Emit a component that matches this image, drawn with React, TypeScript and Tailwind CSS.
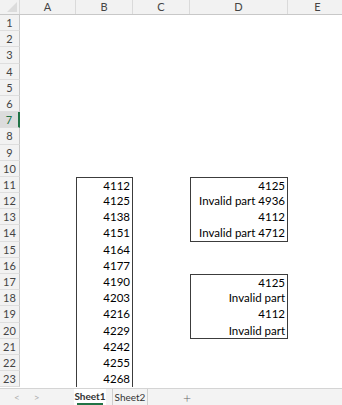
const cols = [
  { name: "A", w: "w-[56px]" },
  { name: "B", w: "w-[57px]" },
  { name: "C", w: "w-[57px]" },
  { name: "D", w: "w-[98px]" },
  { name: "E", w: "w-[60px]" },
];

const bValues = [4112, 4125, 4138, 4151, 4164, 4177, 4190, 4203, 4216, 4229, 4242, 4255, 4268];

const dValues: Record<number, string> = {
  11: "4125",
  12: "Invalid part 4936",
  13: "4112",
  14: "Invalid part 4712",
  17: "4125",
  18: "Invalid part",
  19: "4112",
  20: "Invalid part",
};

const boxRow = (r: number) => {
  const firstBox = r >= 11 && r <= 14;
  const secondBox = r >= 17 && r <= 20;
  if (!firstBox && !secondBox) return "";
  const top = r === 11 || r === 17 ? " border-t" : "";
  const bottom = r === 14 || r === 20 ? " border-b" : "";
  return "border-l border-r border-[#3c3c3c]" + top + bottom;
};

const rows = Array.from({ length: 23 }, (_, i) => i + 1);

export default function App() {
  return (
    <div className="flex h-[405px] w-[342px] flex-col overflow-hidden bg-white font-['Lato',sans-serif] text-[11.5px] text-black">
      {/* column headers */}
      <div className="flex h-[15px] shrink-0 border-b border-[#c8c8c8] bg-[#f2f2f2] text-[11px] text-[#444]">
        <div className="relative w-[20px] shrink-0 border-r border-[#dadada]">
          <div className="absolute bottom-[2px] right-[2px] h-0 w-0 border-b-[10px] border-l-[10px] border-b-[#dcdcdc] border-l-transparent" />
        </div>
        {cols.map((c) => (
          <div key={c.name} className={`${c.w} shrink-0 border-r border-[#dadada] text-center leading-[14px]`}>
            {c.name}
          </div>
        ))}
      </div>

      {/* grid body */}
      <div className="flex flex-1 flex-col overflow-hidden">
        {rows.map((r) => {
          const selected = r === 7;
          return (
            <div key={r} className="flex h-[16.2px] shrink-0">
              <div
                className={`w-[20px] shrink-0 border-b border-[#dedede] text-center text-[11px] leading-[16px] ${
                  selected
                    ? "border-r-2 border-r-[#217346] bg-[#dcdcdc] text-[#217346]"
                    : "border-r border-r-[#c8c8c8] bg-[#f2f2f2] text-[#444]"
                }`}
              >
                {r}
              </div>
              <div className="w-[56px] shrink-0" />
              <div
                className={`w-[57px] shrink-0 pr-[2px] text-right leading-[15px] ${
                  r >= 11 ? "border-l border-r border-[#3c3c3c]" : ""
                } ${r === 11 ? "border-t" : ""}`}
              >
                {r >= 11 ? bValues[r - 11] : ""}
              </div>
              <div className="w-[57px] shrink-0" />
              <div className={`w-[98px] shrink-0 pr-[2px] text-right leading-[15px] ${boxRow(r)}`}>
                {dValues[r] ?? ""}
              </div>
              <div className="flex-1" />
            </div>
          );
        })}
      </div>

      {/* sheet tabs */}
      <div className="flex h-[17px] shrink-0 items-stretch border-t border-[#d4d4d4] bg-[#f3f3f3] text-[10px] text-[#333]">
        <div className="flex w-[68px] items-center gap-[14px] pl-[14px] text-[#b0b0b0]">
          <span>&lt;</span>
          <span>&gt;</span>
        </div>
        <div className="ml-[6px] flex w-[32px] flex-col items-center bg-white font-bold">
          <span className="leading-[14px]">Sheet1</span>
          <span className="h-[2px] w-[26px] bg-[#217346]" />
        </div>
        <div className="ml-[6px] flex w-[36px] items-center justify-center border-x border-[#cfcfcf] leading-[15px]">
          Sheet2
        </div>
        <div className="ml-[35px] flex items-center text-[14px] font-light text-[#666]">+</div>
      </div>
    </div>
  );
}
